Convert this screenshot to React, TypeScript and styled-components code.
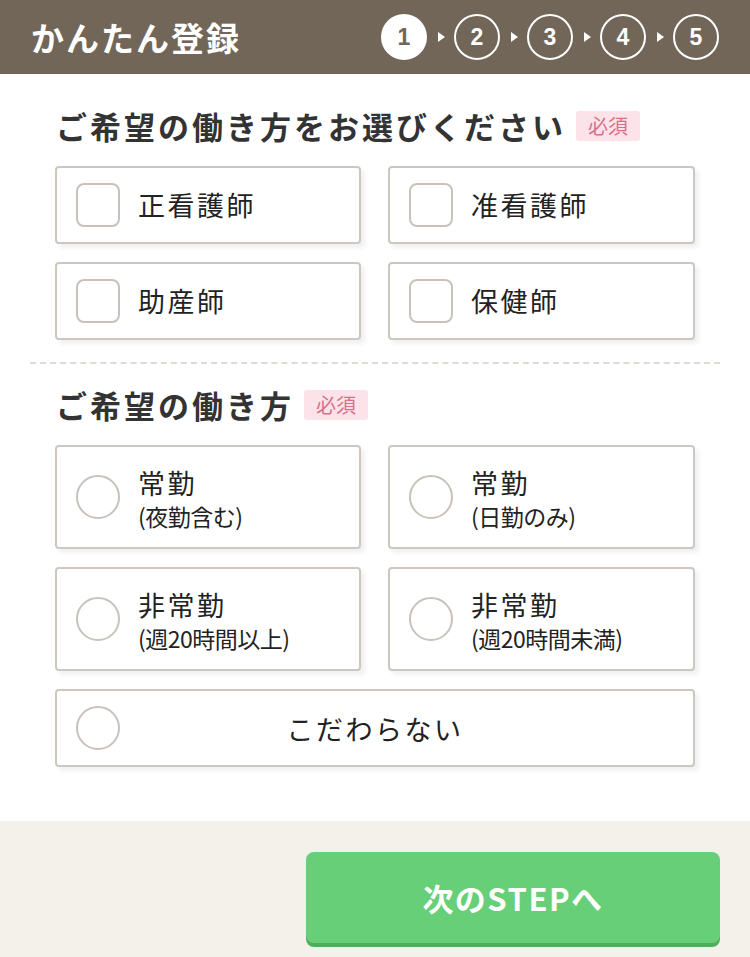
import styled, { createGlobalStyle } from 'styled-components';

const GlobalStyle = createGlobalStyle`
  html, body {
    margin: 0;
    padding: 0;
    background: #ffffff;
  }
  body {
    font-family: 'Noto Sans CJK JP', 'Noto Sans', sans-serif;
    color: #333333;
  }
  * { box-sizing: border-box; }
`;

const JOB_TYPES = ['正看護師', '准看護師', '助産師', '保健師'];

const WORK_STYLES = [
  { main: '常勤', sub: '(夜勤含む)' },
  { main: '常勤', sub: '(日勤のみ)' },
  { main: '非常勤', sub: '(週20時間以上)' },
  { main: '非常勤', sub: '(週20時間未満)' },
];

export default function App() {
  return (
    <Page>
      <GlobalStyle />
      <Header>
        <Title>かんたん登録</Title>
        <Steps>
          {[1, 2, 3, 4, 5].map((n) => (
            <StepItem key={n}>
              {n > 1 && <Arrow />}
              <StepCircle $active={n === 1}>{n}</StepCircle>
            </StepItem>
          ))}
        </Steps>
      </Header>

      <Body>
        <Heading>
          ご希望の働き方をお選びください<Badge>必須</Badge>
        </Heading>
        <OptionGrid>
          {JOB_TYPES.map((label) => (
            <OptionCard key={label} $height={78}>
              <CheckBox />
              <OptionLabel>{label}</OptionLabel>
            </OptionCard>
          ))}
        </OptionGrid>

        <Divider />

        <Heading>
          ご希望の働き方<Badge>必須</Badge>
        </Heading>
        <OptionGrid>
          {WORK_STYLES.map((w) => (
            <OptionCard key={w.sub} $height={104}>
              <Radio />
              <OptionText>
                <OptionLabel>{w.main}</OptionLabel>
                <SubLabel>{w.sub}</SubLabel>
              </OptionText>
            </OptionCard>
          ))}
          <WideCard $height={78}>
            <Radio />
            <CenterLabel>こだわらない</CenterLabel>
          </WideCard>
        </OptionGrid>
      </Body>

      <Footer>
        <NextButton type="button">次のSTEPへ</NextButton>
      </Footer>
    </Page>
  );
}

const Page = styled.div`
  width: 750px;
  min-height: 957px;
  display: flex;
  flex-direction: column;
  background: #ffffff;
`;

const Header = styled.header`
  height: 74px;
  display: flex;
  align-items: center;
  justify-content: space-between;
  padding: 0 31px 0 31px;
  background: #726659;
`;

const Title = styled.h1`
  margin: 0;
  color: #ffffff;
  font-size: 33px;
  font-weight: 700;
  letter-spacing: 2px;
  line-height: 1;
`;

const Steps = styled.div`
  display: flex;
  align-items: center;
`;

const StepItem = styled.div`
  display: flex;
  align-items: center;
`;

const Arrow = styled.span`
  width: 0;
  height: 0;
  margin: 0 9px 0 11px;
  border-top: 5px solid transparent;
  border-bottom: 5px solid transparent;
  border-left: 7px solid #ffffff;
`;

const StepCircle = styled.span<{ $active: boolean }>`
  width: 46px;
  height: 46px;
  display: flex;
  align-items: center;
  justify-content: center;
  border: 2px solid #ffffff;
  border-radius: 50%;
  background: ${(p) => (p.$active ? '#ffffff' : 'transparent')};
  color: ${(p) => (p.$active ? '#726659' : '#ffffff')};
  font-family: 'Liberation Sans', Arial, sans-serif;
  font-size: 23px;
  font-weight: 700;
`;

const Body = styled.main`
  padding: 33px 55px 54px;
`;

const Heading = styled.h2`
  display: flex;
  align-items: center;
  margin: 0 0 21px;
  padding-left: 1px;
  color: #333333;
  font-size: 31px;
  font-weight: 700;
  letter-spacing: 3px;
  line-height: 38px;
`;

const Badge = styled.span`
  margin-left: 10px;
  padding: 0 12px;
  height: 30px;
  display: inline-flex;
  align-items: center;
  border-radius: 3px;
  background: #fbe3e9;
  color: #d9708a;
  font-size: 20px;
  font-weight: 400;
  letter-spacing: 0;
  line-height: 1;
`;

const OptionGrid = styled.div`
  display: grid;
  grid-template-columns: 306px 307px;
  column-gap: 27px;
  row-gap: 18px;
`;

const OptionCard = styled.div<{ $height: number }>`
  position: relative;
  height: ${(p) => p.$height}px;
  display: flex;
  align-items: center;
  gap: 18px;
  padding: 0 19px;
  border: 2px solid #cdc7c0;
  border-radius: 4px;
  background: #ffffff;
  box-shadow: 4px 4px 4px rgba(0, 0, 0, 0.06);
`;

const WideCard = styled(OptionCard)`
  grid-column: 1 / -1;
`;

const CheckBox = styled.span`
  flex: none;
  width: 44px;
  height: 44px;
  border: 2px solid #c8c2bb;
  border-radius: 8px;
  background: #ffffff;
`;

const Radio = styled.span`
  flex: none;
  width: 44px;
  height: 44px;
  border: 2px solid #c8c2bb;
  border-radius: 50%;
  background: #ffffff;
`;

const OptionText = styled.div`
  display: flex;
  flex-direction: column;
  padding-top: 4px;
`;

const OptionLabel = styled.span`
  color: #222222;
  font-size: 27px;
  font-weight: 400;
  letter-spacing: 2.5px;
  line-height: 34px;
`;

const SubLabel = styled.span`
  color: #222222;
  font-size: 23px;
  letter-spacing: -0.5px;
  line-height: 32px;
`;

const CenterLabel = styled.span`
  position: absolute;
  left: 0;
  right: 0;
  text-align: center;
  color: #222222;
  font-size: 27px;
  letter-spacing: 2.5px;
`;

const Divider = styled.hr`
  margin: 22px -25px 22px;
  border: 0;
  border-top: 2px dashed #dedbd7;
`;

const Footer = styled.footer`
  flex: 1;
  display: flex;
  justify-content: flex-end;
  align-items: flex-start;
  padding: 31px 30px 0;
  background: #f4f1eb;
`;

const NextButton = styled.button`
  width: 414px;
  height: 91px;
  border: 0;
  border-radius: 8px;
  background: #66cf77;
  box-shadow: 0 4px 0 #4fae5c;
  color: #ffffff;
  font-family: 'Noto Sans CJK JP', 'Noto Sans', sans-serif;
  font-size: 31px;
  font-weight: 700;
  letter-spacing: 1.5px;
  cursor: pointer;
`;
